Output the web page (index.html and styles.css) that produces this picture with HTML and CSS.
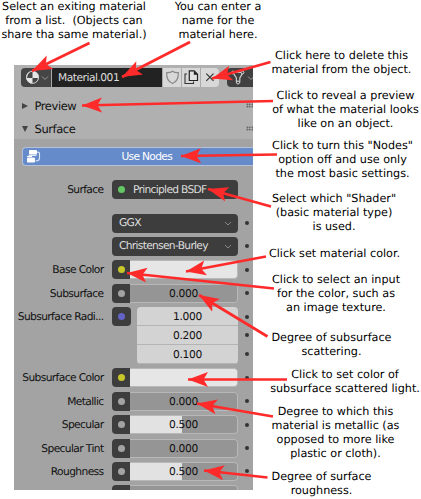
FILE: index.html
```html
<!DOCTYPE html>
<html lang="en">
<head>
<meta charset="utf-8">
<title>Material settings guide</title>
<link rel="stylesheet" href="styles.css">
</head>
<body>
<main class="guide">
  <section class="panel">
    <div class="toolbar">
      <div class="picker">
        <button class="browse" aria-label="Browse materials">
          <svg width="30" height="19" viewBox="0 0 30 19"><circle cx="11.5" cy="9.3" r="6.3" fill="#e6e6e6"/><path d="M11.5 3v7H6.2a6.5 6.5 0 0 1 5.3-7zM11.5 10h5.8a6 6 0 0 1-5.8 5.6z" fill="#454545"/><circle cx="11.5" cy="9.3" r="6" fill="none" stroke="#ddd" stroke-width=".8"/><path d="M21 8.5l3 3 3-3" fill="none" stroke="#999"/></svg>
        </button>
        <div class="name">Material.001</div>
        <button class="tool" aria-label="Fake user"><svg width="19" height="19" viewBox="0 0 19 19"><path d="M9.500 3.200C7.800 4.600 6 4.800 3.700 4.700c-.3 5.400 1.500 9 5.800 10.800 4.300-1.800 6.100-5.400 5.800-10.800-2.300.1-4.100-.1-5.800-1.500z" fill="none" stroke="#898989" stroke-width="1.2"/></svg></button>
        <button class="tool" aria-label="Duplicate"><svg width="19" height="19" viewBox="0 0 19 19"><path d="M7.300 2.800h4.900l3.300 3.500v6.200H7.300z" fill="#e2e2e2" stroke="#222" stroke-width="1.2"/><path d="M11.800 2.800v4h3.700z" fill="#222"/><path d="M5 6H3v9.500h8.500v-2" fill="none" stroke="#333" stroke-width="1.1"/></svg></button>
        <button class="tool" aria-label="Unlink"><svg width="19" height="19" viewBox="0 0 19 19"><path d="M5.300 5.600l7.200 7.200m0-7.200l-7.200 7.200" stroke="#333" stroke-width="1.2"/></svg></button>
      </div>
      <button class="filter" aria-label="Node data"><svg width="27" height="19" viewBox="0 0 27 19"><path d="M6 4.500h10L12.800 10v4H9.400v-4z" fill="none" stroke="#ccc" stroke-width="1.2"/><g fill="#404040" stroke="#ddd"><circle cx="6" cy="4.500" r="1.4"/><circle cx="15.500" cy="4.500" r="1.4"/><circle cx="11" cy="14.500" r="1.5"/></g><path d="M21 8.500l3 3 3-3" fill="none" stroke="#999"/></svg></button>
    </div>
    <div class="section"><svg class="tri" viewBox="0 0 6 6"><path d="M0 0l6 3-6 3z"/></svg><span>Preview</span><i class="grip"></i></div>
    <div class="section"><svg class="tri" viewBox="0 0 6 6"><path d="M0 0h6L3 6z"/></svg><span>Surface</span><i class="grip"></i></div>
    <div class="body">
      <button class="nodes"><svg width="16" height="16" viewBox="0 0 16 16" fill="#fff"><rect x="3" y="1" width="8" height="4.500" rx="1"/><rect x="1" y="8.500" width="8" height="5" rx="1"/><path d="M2.500 6.300h8M1 7.500h5" stroke="#fff"/><path d="M11 3c3 0 2.500 1 2.500 3v3c0 2-1 3-4 3" fill="none" stroke="#dce6fa" stroke-width="1.1"/></svg><span>Use Nodes</span></button>
      <div class="row shader"><label>Surface</label><div class="select"><b class="green"></b><span>Principled BSDF</span></div></div>
      <div class="row"><label></label><div class="select"><span>GGX</span><svg class="chev" viewBox="0 0 8 5"><path d="M1 1l3 3 3-3"/></svg></div><i class="dot"></i></div>
      <div class="row"><label></label><div class="select"><span>Christensen-Burley</span><svg class="chev" viewBox="0 0 8 5"><path d="M1 1l3 3 3-3"/></svg></div><i class="dot"></i></div>
      <div class="row"><label>Base Color</label><div class="field"><div class="socket"><b class="yellow"></b></div><div class="value white"></div></div><i class="dot"></i></div>
      <div class="row"><label>Subsurface</label><div class="field"><div class="socket"><b></b></div><div class="value">0.000</div></div><i class="dot"></i></div>
      <div class="row radius"><label>Subsurface Radi...</label><div class="vector"><div class="socket"><b class="blue"></b></div><div class="stack"><div>1.000</div><div>0.200</div><div>0.100</div></div></div><div class="dots"><i class="dot"></i><i class="dot"></i><i class="dot"></i></div></div>
      <div class="row"><label>Subsurface Color</label><div class="field"><div class="socket"><b class="yellow"></b></div><div class="value white"></div></div><i class="dot"></i></div>
      <div class="row"><label>Metallic</label><div class="field"><div class="socket"><b></b></div><div class="value">0.000</div></div><i class="dot"></i></div>
      <div class="row"><label>Specular</label><div class="field"><div class="socket"><b></b></div><div class="value half">0.500</div></div><i class="dot"></i></div>
      <div class="row"><label>Specular Tint</label><div class="field"><div class="socket"><b></b></div><div class="value">0.000</div></div><i class="dot"></i></div>
      <div class="row"><label>Roughness</label><div class="field"><div class="socket"><b></b></div><div class="value half">0.500</div></div><i class="dot"></i></div>
      <div class="row"><label></label><div class="field"><div class="socket"></div><div class="value"></div></div></div>
    </div>
  </section>

  <svg class="arrows" width="421" height="499" viewBox="0 0 421 499">
    <defs><marker id="head" markerUnits="userSpaceOnUse" markerWidth="20" markerHeight="16" refX="20" refY="8" orient="auto"><path d="M20 8L0 .5 4.500 8 0 15.500z" fill="#ff2a2a"/></marker></defs>
    <g class="shafts">
      <path d="M89.500 43L32 71"/>
      <path d="M190 42L122 77"/>
      <path d="M270.500 62L212 78.500"/>
      <path d="M273 101L82 105.500"/>
      <path d="M277 154.500L181 156"/>
      <path d="M271 206.500L208 189"/>
      <path d="M266 256.500L186 271.500"/>
      <path d="M274 288.500L127 273"/>
      <path d="M267.500 336.500L199 295"/>
      <path d="M287 379.500H188"/>
      <path d="M273 416.500L197 403.500"/>
      <path d="M267.500 477.500L204 470.500"/>
    </g>
  </svg>

  <p class="note n1">Select an exiting material<br>from a list.&nbsp; (Objects can<br>share tha same material.)</p>
  <p class="note n2">You can enter a<br>name for the<br>material here.</p>
  <p class="note n3">Click here to delete this<br>material from the object.</p>
  <p class="note n4">Click to reveal a preview<br>of what the material looks<br>like on an object.</p>
  <p class="note n5">Click to turn this "Nodes"<br>option off and use only<br>the most basic settings.</p>
  <p class="note n6">Select which "Shader"<br>(basic material type)<br>is used.</p>
  <p class="note n7">Click set material color.</p>
  <p class="note n8">Click to select an input<br>for the color, such as<br>an image texture.</p>
  <p class="note n9">Degree of subsurface<br>scattering.</p>
  <p class="note n10">Click to set color of<br>subsurface scattered light.</p>
  <p class="note n11">Degree to which this<br>material is metallic (as<br>opposed to more like<br>plastic or cloth).</p>
  <p class="note n12">Degree of surface<br>roughness.</p>
</main>
</body>
</html>
```
FILE: styles.css
```css
* { box-sizing: border-box; }
body { margin: 0; background: #fff; text-rendering: geometricPrecision; }
button { border: 0; padding: 0; margin: 0; font: inherit; color: inherit; letter-spacing: inherit; }
svg { display: block; flex: none; }

.guide { position: relative; width: 421px; height: 499px; overflow: hidden; padding: 65px 0 0 14px; }

.panel {
  width: 239px; height: 425px; overflow: hidden; background: #b0b0b0;
  font: 10.7px/20px "DejaVu Sans", sans-serif; letter-spacing: -0.7px; color: #111;
}
.toolbar { display: flex; gap: 8px; height: 29px; padding: 3px 0 0 7px; }
.picker { display: flex; gap: 1px; width: 198px; height: 19px; border-radius: 4px; overflow: hidden; background: #aaa; flex: none; }
.browse { width: 30px; background: #454545; }
.name { width: 110px; padding-left: 6px; background: #222; color: #ddd; letter-spacing: -.5px; }
.tool { width: 18px; background: #d8d8d8; }
.filter { width: 27px; height: 19px; flex: none; background: #404040; border-radius: 4px 0 0 4px; }

.section { display: flex; align-items: center; height: 23px; padding-left: 8px; font-size: 11.5px; letter-spacing: -.42px; }
.section span { flex: 1; margin-left: 6.5px; }
.tri { width: 6px; height: 6px; fill: #444; }
.grip { width: 7px; height: 5px; background: radial-gradient(circle, #444 .6px, transparent 1px) 0 0 / 2.5px 2.5px; }

.body { height: 351px; margin-top: -1px; padding-top: 8px; background: #a3a3a3; }
.nodes {
  display: flex; align-items: center; width: 233px; height: 19px; margin-left: 8px; padding-left: 3px;
  background: #668bcb; color: #fff; border: 1px solid #b5c1d8; border-width: 1px 0 1px 1px; border-radius: 4px 0 0 4px;
}
.nodes span { margin-left: 79.5px; }

.row { display: grid; grid-template-columns: 90px 126px 1fr; column-gap: 8px; height: 19px; margin-bottom: 4.45px; }
.row label { text-align: right; white-space: nowrap; margin-right: .5px; letter-spacing: -.62px; }
.shader { margin: 14px 0 14.5px; }
.select { display: flex; align-items: center; height: 19px; padding: 0 6px 0 7px; background: #3d3d3d; color: #ddd; border-radius: 4px; }
.select span { flex: 1; }
.chev { width: 8px; height: 5px; fill: none; stroke: #888; }
b { display: block; width: 7px; height: 7px; border-radius: 50%; background: #a3a3a3; }
.green { background: #63c763; margin: 0 8px 0 -1px; }
.yellow { background: #c7c729; }
.blue { background: #6363c7; }
.field { display: flex; height: 19px; border-radius: 4px; overflow: hidden; }
.socket { display: grid; place-items: center; width: 18px; height: 19px; background: #3d3d3d; flex: none; }
.value { flex: 1; border: 1px solid #b8b8b8; border-left: 0; border-radius: 0 4px 4px 0; background: #959595; text-align: center; line-height: 18px; letter-spacing: -.3px; }
.white { background: #e6e6e6; }
.half { background: linear-gradient(90deg, #e2e2e2 49%, #959595 49%); }
.dot { width: 4px; height: 4px; margin: 7.500px 0 0 -1px; border-radius: 50%; background: #333; }
.radius { height: 56.5px; }
.vector { display: flex; gap: 6px; }
.vector .socket { width: 19px; border-radius: 4px; }
.stack { flex: 1; border-radius: 4px; overflow: hidden; background: #d3d3d3; text-align: center; letter-spacing: -.3px; }
.stack div { height: 19px; line-height: 19px; border-bottom: 1px solid #b4b4b4; }
.dots { display: grid; grid-template-rows: repeat(3, 18.7px); }

.arrows { position: absolute; left: 0; top: 0; }
.shafts path { fill: none; stroke: #ff2a2a; stroke-width: 2.7; marker-end: url(#head); }

.note { position: absolute; margin: 0; transform: translateX(-50%); font: 11.2px/14px "DejaVu Sans", sans-serif; color: #000; text-align: center; white-space: nowrap; }
.n1 { left: 74px; top: 0; }
.n2 { left: 218px; top: 0; }
.n3 { left: 341.5px; top: 49px; }
.n4 { left: 345.5px; top: 89px; }
.n5 { left: 342.5px; top: 139px; }
.n6 { left: 334px; top: 192px; }
.n7 { left: 334.5px; top: 247px; }
.n8 { left: 336px; top: 273px; }
.n9 { left: 331.500px; top: 331px; }
.n10 { left: 345px; top: 368px; }
.n11 { left: 335.500px; top: 405px; }
.n12 { left: 321.500px; top: 470px; }
```
